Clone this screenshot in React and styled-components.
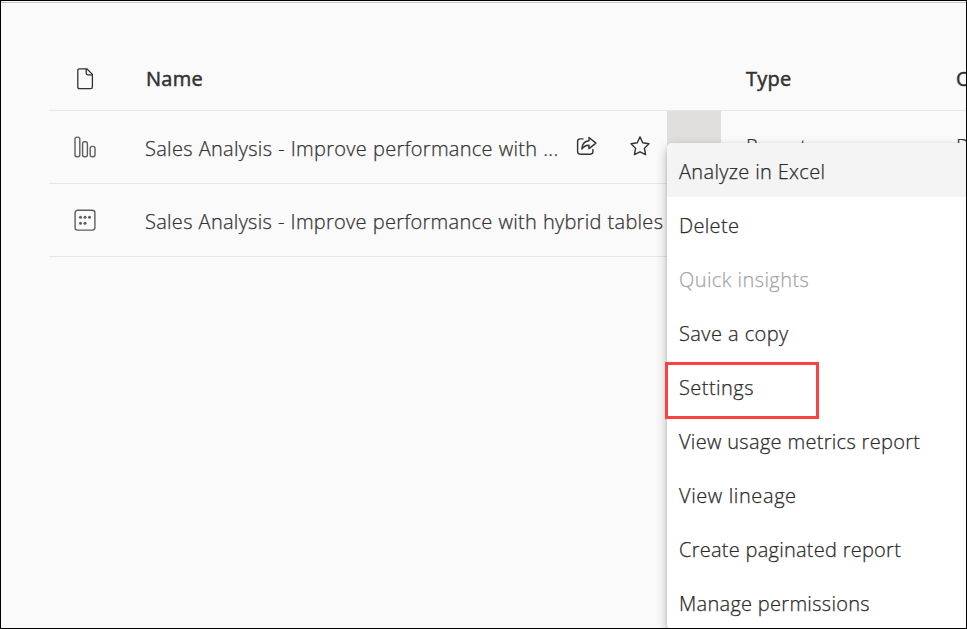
import React from "react";
import styled, { createGlobalStyle } from "styled-components";

const GlobalStyle = createGlobalStyle`
  * { box-sizing: border-box; }
  body {
    margin: 0;
    font-family: "Open Sans", "Noto Sans", sans-serif;
    overflow: hidden;
  }
`;

const Screen = styled.main`
  position: relative;
  width: 967px;
  height: 629px;
  overflow: hidden;
  background: #fafafa;
  border: 1px solid #000;
  color: #333;
`;

const TopRule = styled.div`
  height: 2px;
  border-bottom: 1px solid #c8c6c8;
`;

const Table = styled.section`
  margin: 44px 0 0 48px;
  width: 960px;
`;

const Row = styled.div`
  display: grid;
  grid-template-columns: 96px 522px 79px 210px 53px;
  align-items: center;
  height: ${(p) => (p.$header ? 64 : 73)}px;
  border-bottom: 1px solid #e6e6e6;
`;

const IconCell = styled.div`
  display: flex;
  padding-left: 24px;
  color: ${(p) => p.$color || "#605e5c"};

  svg {
    display: block;
  }
`;

const Heading = styled.div`
  font-size: 20px;
  font-weight: 400;
  line-height: 28px;
  letter-spacing: 0.25px;
  -webkit-text-stroke: 0.5px currentColor;
  white-space: nowrap;
  color: #323130;
  padding-left: ${(p) => p.$indent || 0}px;
`;

const Cell = styled.div`
  display: flex;
  align-items: center;
  min-width: 0;
`;

const Label = styled.span`
  font-size: 20px;
  font-weight: 300;
  line-height: 28px;
  letter-spacing: ${(p) => p.$spacing || 0}px;
  -webkit-text-stroke: 0.25px currentColor;
  white-space: nowrap;
  color: #333;
`;

const NameText = styled(Label)`
  width: ${(p) => (p.$short ? "431px" : "auto")};
  padding-top: 3px;
  word-spacing: 0.4px;
`;

const Actions = styled.div`
  display: flex;
  gap: 31px;
  color: #333;
  padding-bottom: 3px;

  svg {
    display: block;
  }
`;

const MoreCell = styled.div`
  align-self: stretch;
  width: 54px;
  background: #e1dfdd;
`;

const Menu = styled.nav`
  position: absolute;
  left: 666px;
  top: 142px;
  width: 300px;
  height: 486px;
  overflow: hidden;
  border-radius: 5px;
  background: #fff;
`;

const MenuShadow = styled.div`
  position: absolute;
  left: 666px;
  top: 142px;
  width: 300px;
  height: 486px;
  border-radius: 5px;
  box-shadow: 0 5px 12px rgba(0, 0, 0, 0.28), 0 1px 3px rgba(0, 0, 0, 0.14);
`;

const MenuItem = styled.div`
  display: flex;
  align-items: center;
  height: 54px;
  padding: 3px 12px 0;
  font-size: 20px;
  font-weight: 300;
  line-height: 28px;
  letter-spacing: ${(p) => p.$spacing || 0}px;
  -webkit-text-stroke: 0.25px currentColor;
  white-space: nowrap;
  color: ${(p) => (p.$disabled ? "#a6a6a6" : "#2b2a29")};
  background: ${(p) => (p.$active ? "#f4f4f4" : "#fff")};
`;

const Highlight = styled.div`
  position: absolute;
  left: 664px;
  top: 361px;
  width: 154px;
  height: 57px;
  border: 3px solid #fb4141;
`;

const FileIcon = () => (
  <svg width="24" height="24" viewBox="0 0 24 24" fill="none" stroke="currentColor" strokeWidth="1.3" strokeLinejoin="round">
    <path d="M6.4 1.8h7.4l5.6 5.6v12.7q0 1.6-1.6 1.6H6.4q-1.6 0-1.6-1.6V3.4q0-1.6 1.6-1.6Z" />
    <path d="M13.2 2v4.3q0 1.5 1.5 1.5h4.6" />
  </svg>
);

const ReportIcon = () => (
  <svg width="24" height="24" viewBox="0 0 24 24" fill="none" stroke="currentColor" strokeWidth="1.4">
    <rect x="2" y="2.1" width="4.8" height="19.6" rx="2" />
    <rect x="9.6" y="6.8" width="4.8" height="14.9" rx="2" />
    <rect x="17.2" y="11.4" width="4.8" height="10.3" rx="2" />
  </svg>
);

const DatasetIcon = () => (
  <svg width="24" height="24" viewBox="0 0 24 24">
    <rect x="2.1" y="2.3" width="19.8" height="19.8" rx="2.6" fill="none" stroke="currentColor" strokeWidth="1.4" />
    <g fill="currentColor">
      <circle cx="7.5" cy="9.3" r="1.5" />
      <circle cx="12" cy="9.3" r="1.5" />
      <circle cx="16.5" cy="9.3" r="1.5" />
      <circle cx="7.5" cy="15.2" r="1.5" />
      <circle cx="12" cy="15.2" r="1.5" />
    </g>
  </svg>
);

const ShareIcon = () => (
  <svg width="22" height="22" viewBox="0 0 22 22" fill="none" stroke="currentColor" strokeWidth="1.4" strokeLinejoin="round" strokeLinecap="round">
    <path d="M7 3.9H4.2Q1.6 3.9 1.6 6.5v10.1q0 2.6 2.6 2.6h10.1q2.6 0 2.6-2.6v-2.2" />
    <path d="M13 2.5l6.900 5.600-6.900 5.500v-3.300c-3.200-.2-5.100.9-7.200 3.800.3-5 2.800-8.100 7.200-8.400Z" />
  </svg>
);

const StarIcon = () => (
  <svg width="22" height="22" viewBox="0 0 22 22" fill="none" stroke="currentColor" strokeWidth="1.4" strokeLinejoin="round">
    <path d="M11 1.9l2.7 5.9q3 .4 6.3.9-2.3 2.2-4.6 4.7.6 3.2 1.2 6.3L11 16.8l-5.6 2.9q.6-3.1 1.2-6.3Q4.3 10.9 2 8.700q3.300-.5 6.300-.9Z" />
  </svg>
);

const menuItems = [
  { text: "Analyze in Excel", active: true, spacing: 0.33 },
  { text: "Delete", spacing: 0.33 },
  { text: "Quick insights", disabled: true, spacing: 0.42 },
  { text: "Save a copy", spacing: 0.43 },
  { text: "Settings", spacing: 0.45 },
  { text: "View usage metrics report", spacing: 0.31 },
  { text: "View lineage", spacing: 0.6 },
  { text: "Create paginated report", spacing: 0.26 },
  { text: "Manage permissions", spacing: 0.29 },
];

export default function App() {
  return (
    <>
      <GlobalStyle />
      <Screen>
        <TopRule />
        <Table>
          <Row $header>
            <IconCell $color="#323130"><FileIcon /></IconCell>
            <Heading $indent={1}>Name</Heading>
            <span />
            <Heading>Type</Heading>
            <Heading>Owner</Heading>
          </Row>
          <Row>
            <IconCell><ReportIcon /></IconCell>
            <Cell>
              <NameText $short $spacing={0.29}>Sales Analysis - Improve performance with ...</NameText>
              <Actions>
                <ShareIcon />
                <StarIcon />
              </Actions>
            </Cell>
            <MoreCell />
            <Label>Report</Label>
            <Label>Default</Label>
          </Row>
          <Row>
            <IconCell><DatasetIcon /></IconCell>
            <Cell>
              <NameText $spacing={0.28}>Sales Analysis - Improve performance with hybrid tables</NameText>
            </Cell>
          </Row>
        </Table>
        <MenuShadow />
        <Menu>
          {menuItems.map((item) => (
            <MenuItem key={item.text} $active={item.active} $disabled={item.disabled} $spacing={item.spacing}>
              {item.text}
            </MenuItem>
          ))}
        </Menu>
        <Highlight />
      </Screen>
    </>
  );
}
